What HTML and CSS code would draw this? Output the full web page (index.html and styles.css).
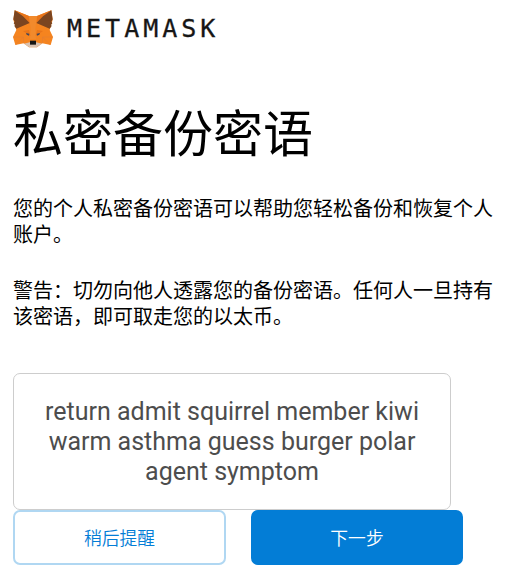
FILE: index.html
```html
<!DOCTYPE html>
<html lang="zh-CN">
<head>
<meta charset="utf-8">
<title>MetaMask</title>
<link rel="stylesheet" href="styles.css">
</head>
<body>
<main class="page">
  <header class="brand">
    <svg class="fox" viewBox="0 0 120 114" aria-hidden="true">
      <path fill="#f5841f" d="M5 1 48 18H72L115 1 119 29 110 60 120 81 113 105 88 100 72 112H48L32 100 7 105 0 81 10 60 1 29Z"/>
      <path fill="#e8751a" d="M5 1 48 18 50 40ZM115 1 72 18 70 40Z"/>
      <path fill="#7b4520" d="M5 1 30 19 50 39 10 56 4 48 6 44 2 40 5 35 1 28ZM115 1 90 19 70 39 110 56 116 48 114 44 118 40 115 35 119 28Z"/>
      <path fill="#f28a2c" d="M48 18H72L67 57 69 87H51L53 57Z"/>
      <path fill="#e8751a" d="M30 63 48 60 52 78ZM90 63 72 60 68 78Z"/>
      <path fill="#46485a" d="M39 69 49 71 48 77 41 74ZM81 69 71 71 72 77 79 74Z"/>
      <path fill="#d8c2b2" d="M33 101 50 97H70L87 101 71 112H49Z"/>
      <path fill="#161616" d="M51 92H69V104H51Z"/>
      <path fill="none" stroke="#dc7c3b" stroke-width="1.5" d="M0 81H31L8 105M120 81H89L112 105M31 81 32 100M89 81 88 100"/>
    </svg>
    <span class="wordmark">METAMASK</span>
  </header>
  <h1 class="title">私密备份密语</h1>
  <section class="copy">
    <p>您的个人私密备份密语可以帮助您轻松备份和恢复个人账户。</p>
    <p>警告：切勿向他人透露您的备份密语。任何人一旦持有该密语，即可取走您的以太币。</p>
  </section>
  <div class="phrase">return admit squirrel member kiwi warm asthma guess burger polar agent symptom</div>
  <div class="actions">
    <button class="button secondary">稍后提醒</button>
    <button class="button primary">下一步</button>
  </div>
</main>
</body>
</html>
```
FILE: styles.css
```css
* { box-sizing: border-box; }
body {
  margin: 0;
  background: #fff;
  color: #000;
  font-family: Roboto, "Noto Sans CJK SC", sans-serif;
}
.page { padding: 10px 0 0 13px; }
.brand { display: flex; align-items: center; height: 38px; }
.fox { width: 40px; height: 38px; }
.wordmark {
  margin-left: 14px;
  color: #161616;
  font: 25px/38px "DejaVu Sans Mono", monospace;
  letter-spacing: 4px;
  -webkit-text-stroke: 0.3px #161616;
}
.title {
  margin: 51px 0 0;
  font-size: 50px;
  font-weight: 400;
  line-height: 72px;
}
.copy { width: 482px; margin-top: 25px; }
.copy p {
  margin: 0 0 30px;
  font-size: 20px;
  font-weight: 400;
  line-height: 26px;
  line-break: strict;
}
.phrase {
  width: 438px;
  height: 137px;
  margin-top: 43px;
  padding: 23px 20px;
  border: 1px solid #cdcdcd;
  border-radius: 7px;
  color: #4d4d4d;
  font-size: 25px;
  line-height: 30px;
  text-align: center;
}
.actions { display: flex; gap: 25px; }
.button {
  height: 55px;
  padding: 0 0 2px;
  border: 2px solid #b0d7f2;
  border-radius: 7px;
  font: 350 17.8px/24px "Noto Sans CJK SC", sans-serif;
}
.secondary { width: 213px; background: #fff; color: #037dd6; }
.primary { width: 212px; border-color: #037dd6; background: #037dd6; color: #fff; }
```
